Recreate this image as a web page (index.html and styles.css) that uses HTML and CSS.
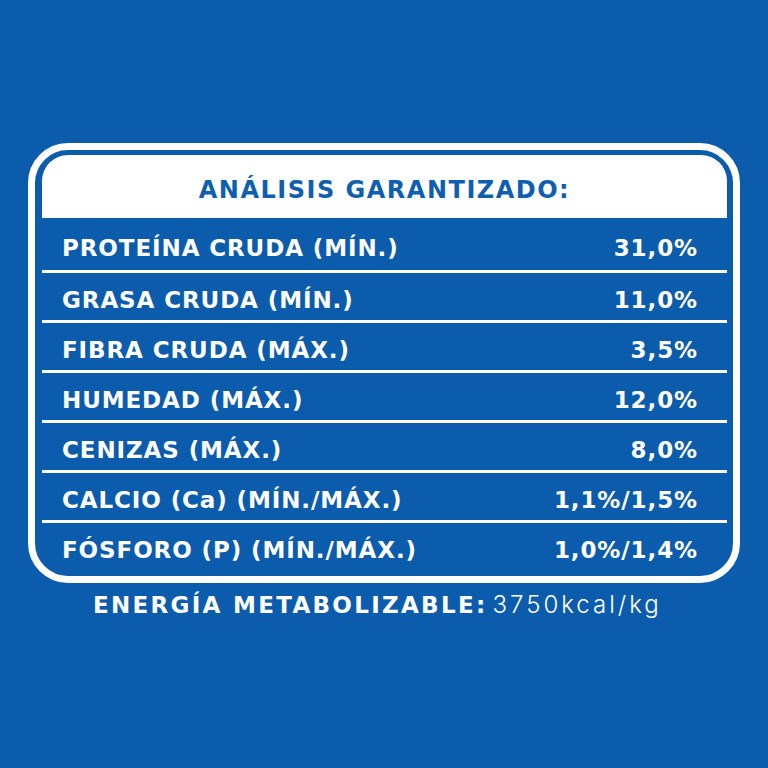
FILE: index.html
```html
<!DOCTYPE html>
<html lang="es">
<head>
<meta charset="utf-8">
<title>Análisis garantizado</title>
<link rel="stylesheet" href="styles.css">
</head>
<body>
<div class="panel">
  <div class="table">
    <div class="head">ANÁLISIS GARANTIZADO:</div>
    <div class="row first"><span>PROTEÍNA CRUDA (MÍN.)</span><span>31,0%</span></div>
    <div class="row"><span>GRASA CRUDA (MÍN.)</span><span>11,0%</span></div>
    <div class="row"><span>FIBRA CRUDA (MÁX.)</span><span>3,5%</span></div>
    <div class="row"><span>HUMEDAD (MÁX.)</span><span>12,0%</span></div>
    <div class="row"><span>CENIZAS (MÁX.)</span><span>8,0%</span></div>
    <div class="row"><span>CALCIO (Ca) (MÍN./MÁX.)</span><span>1,1%/1,5%</span></div>
    <div class="row last"><span>FÓSFORO (P) (MÍN./MÁX.)</span><span>1,0%/1,4%</span></div>
  </div>
</div>
<div class="energy"><span class="energy-label">ENERGÍA METABOLIZABLE:</span><span class="energy-value">3750kcal/kg</span></div>
</body>
</html>
```
FILE: styles.css
```css
html, body {
  margin: 0;
  padding: 0;
}
body {
  width: 768px;
  height: 768px;
  overflow: hidden;
  background: #0b5cad;
  font-family: "DejaVu Sans", "Liberation Sans", sans-serif;
  color: #fff;
}
.panel {
  box-sizing: border-box;
  width: 712px;
  margin: 143px 0 0 28px;
  border: 7px solid #fff;
  border-radius: 40px;
  padding: 5px 6px 6px 7px;
}
.table {
  display: flex;
  flex-direction: column;
}
.head {
  box-sizing: border-box;
  height: 63px;
  padding-top: 7px;
  background: #fff;
  border-radius: 26px 26px 0 0;
  color: #0f5fb0;
  font-weight: bold;
  font-size: 24px;
  letter-spacing: 1.5px;
  line-height: 1;
  display: flex;
  align-items: center;
  justify-content: center;
}
.row {
  box-sizing: border-box;
  height: 50px;
  padding: 7px 29px 0 20px;
  display: flex;
  align-items: center;
  justify-content: space-between;
  font-weight: bold;
  font-size: 23px;
  letter-spacing: 0.9px;
  line-height: 1;
  border-bottom: 3px solid #fff;
}
.row.first {
  height: 55px;
  padding-top: 8px;
}
.row.last {
  border-bottom: none;
  height: 47px;
}
.energy {
  display: flex;
  align-items: baseline;
  gap: 5px;
  margin: 10px 0 0 93px;
  line-height: 1;
}
.energy-label {
  font-weight: bold;
  font-size: 23px;
  letter-spacing: 2.3px;
}
.energy-value {
  font-family: Inter, "DejaVu Sans", sans-serif;
  font-weight: 300;
  font-size: 24px;
  letter-spacing: 3px;
}
```
